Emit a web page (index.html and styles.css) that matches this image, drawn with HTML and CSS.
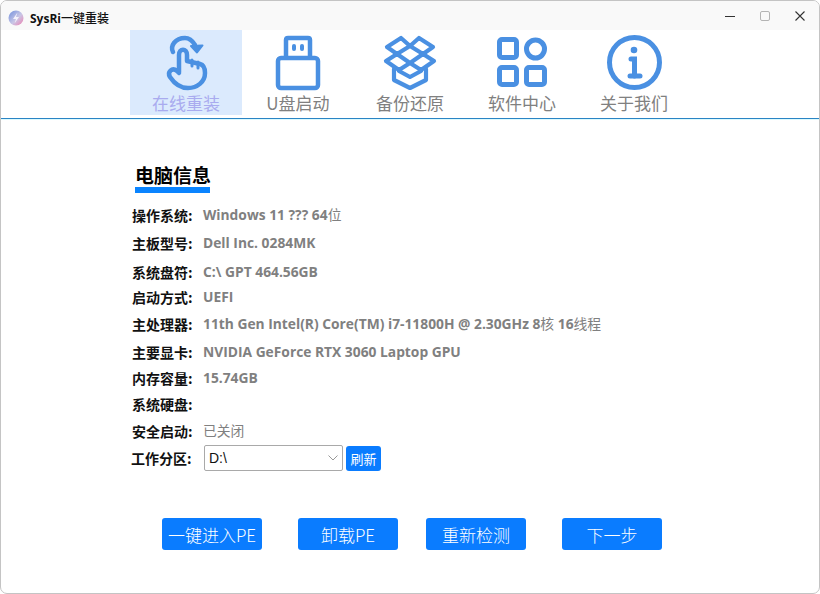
FILE: index.html

```html
<!DOCTYPE html>
<html lang="zh-CN">
<head>
  <meta charset="UTF-8">
  <meta name="viewport" content="width=device-width, initial-scale=1.0">
  <title>SysRi一键重装</title>
  <link rel="stylesheet" href="styles.css">
</head>
<body>
  <div class="window">
    <header class="titlebar">
      <div class="app-title">
        <svg class="logo" viewBox="0 0 16 16" width="16" height="16">
          <defs>
            <linearGradient id="logoGrad" x1="0" y1="0" x2="1" y2="1">
              <stop offset="0" stop-color="#6f8fdc"/>
              <stop offset="0.55" stop-color="#c9c6e6"/>
              <stop offset="1" stop-color="#ef7fae"/>
            </linearGradient>
          </defs>
          <circle cx="8" cy="8" r="7.5" fill="url(#logoGrad)"/>
          <path d="M9.500 2.500 L5 9 H8 L6.500 13.500 L11 7 H8 Z" fill="#f4f2fb"/>
        </svg>
        <span class="app-name"><strong>SysRi</strong>一键重装</span>
      </div>
      <div class="win-controls">
        <svg width="12" height="12" viewBox="0 0 12 12"><path d="M1 6.500H11" stroke="#333" stroke-width="1" fill="none"/></svg>
        <svg width="12" height="12" viewBox="0 0 12 12"><rect x="1.500" y="1.500" width="9" height="9" rx="1.500" stroke="#b4b4b4" fill="none"/></svg>
        <svg width="12" height="12" viewBox="0 0 12 12"><path d="M1.500 1.500L10.500 10.500M10.500 1.500L1.500 10.500" stroke="#333" stroke-width="1.100" fill="none"/></svg>
      </div>
    </header>

    <nav class="nav">
      <a class="nav-item active">
        <svg class="nav-icon" viewBox="0 0 56 56" fill="none" stroke="#4a90e2" stroke-width="4.500" stroke-linecap="round" stroke-linejoin="round">
          <path d="M15 17C12 11 17 3 27 3C31 3 34 5 37 10"/>
          <path d="M33 11L44.500 10.500L39 17.500Z" fill="#4a90e2" stroke-width="2"/>
          <path d="M21 37V20C21 13 29 13 29 20V26L42 29C46 30 47 34 47 38C47 47 39 53 30 53C21 53 16 48 12 42C9 37 14 32 19 36L21 38"/>
          <path d="M34 25V31M40 27V33" stroke-width="3"/>
        </svg>
        <span>在线重装</span>
      </a>
      <a class="nav-item">
        <svg class="nav-icon" viewBox="0 0 56 56" fill="none" stroke="#4a90e2" stroke-width="4.500" stroke-linejoin="round">
          <path d="M16 23V5Q16 3 18 3H38Q40 3 40 5V23"/>
          <rect x="8" y="23" width="40" height="30" rx="3"/>
          <rect x="22" y="9" width="4" height="7" rx="2" fill="#4a90e2" stroke="none"/>
          <rect x="30" y="9" width="4" height="7" rx="2" fill="#4a90e2" stroke="none"/>
        </svg>
        <span>U盘启动</span>
      </a>
      <a class="nav-item">
        <svg class="nav-icon" viewBox="0 0 56 56" fill="none" stroke="#4a90e2" stroke-width="4.200" stroke-linejoin="round" stroke-linecap="round">
          <path d="M19 3L5 12L15 19L28 11L41 19L51 12L37 3L28 11Z"/>
          <path d="M15 19L4 26L17 35L28 28L39 35L52 26L41 19L28 28Z"/>
          <path d="M12 34V45L28 53L44 45V34"/>
          <path d="M17 36L28 42L39 36"/>
        </svg>
        <span>备份还原</span>
      </a>
      <a class="nav-item">
        <svg class="nav-icon" viewBox="0 0 56 56" fill="none" stroke="#4a90e2" stroke-width="5" stroke-linejoin="round">
          <rect x="5.500" y="4.500" width="17" height="18" rx="2.500"/>
          <circle cx="41.500" cy="14" r="9"/>
          <rect x="5.500" y="32.500" width="17" height="17" rx="2.500"/>
          <rect x="32.500" y="32.500" width="18" height="17" rx="2.500"/>
        </svg>
        <span>软件中心</span>
      </a>
      <a class="nav-item">
        <svg class="nav-icon" viewBox="0 0 56 56" fill="none" stroke="#4a90e2" stroke-linecap="round">
          <circle cx="28.500" cy="27.500" r="25" stroke-width="5"/>
          <circle cx="28" cy="15" r="3.300" fill="#4a90e2" stroke="none"/>
          <path d="M25 24H28.500V41" stroke-width="5"/>
          <path d="M24 41H34" stroke-width="5"/>
        </svg>
        <span>关于我们</span>
      </a>
    </nav>

    <main class="content">
      <h2 class="section-title">电脑信息</h2>
      <div class="info-grid">
        <div class="label">操作系统:</div><div class="value">Windows 11 ??? 64<span class="cjk">位</span></div>
        <div class="label">主板型号:</div><div class="value">Dell Inc. 0284MK</div>
        <div class="label">系统盘符:</div><div class="value">C:\ GPT 464.56GB</div>
        <div class="label">启动方式:</div><div class="value">UEFI</div>
        <div class="label">主处理器:</div><div class="value">11th Gen Intel(R) Core(TM) i7-11800H @ 2.30GHz 8<span class="cjk">核</span> 16<span class="cjk">线程</span></div>
        <div class="label">主要显卡:</div><div class="value">NVIDIA GeForce RTX 3060 Laptop GPU</div>
        <div class="label">内存容量:</div><div class="value">15.74GB</div>
        <div class="label">系统硬盘:</div><div class="value"></div>
        <div class="label">安全启动:</div><div class="value"><span class="cjk">已关闭</span></div>
        <div class="label label-partition">工作分区:</div>
        <div class="partition">
          <div class="select">
            <span>D:\</span>
            <svg width="10" height="6" viewBox="0 0 10 6"><path d="M0.500 0.500L5 5L9.500 0.500" stroke="#999" fill="none"/></svg>
          </div>
          <button class="btn btn-small">刷新</button>
        </div>
      </div>
      <div class="actions">
        <button class="btn">一键进入PE</button>
        <button class="btn">卸载PE</button>
        <button class="btn">重新检测</button>
        <button class="btn">下一步</button>
      </div>
    </main>
  </div>
</body>
</html>
```

FILE: styles.css

```css
* {
  box-sizing: border-box;
}
html, body {
  height: 100%;
}
body {
  margin: 0;
  background: #fff;
  font-family: "Liberation Sans", "Noto Sans CJK SC", sans-serif;
  overflow: hidden;
}
.window {
  height: 594px;
  border: 1px solid #c4c4c4;
  border-radius: 7px;
  overflow: hidden;
  background: #fff;
}
.titlebar {
  display: flex;
  align-items: center;
  height: 29px;
  padding-left: 7px;
  background: #f9f9f9;
}
.app-title {
  display: flex;
  align-items: center;
  margin-top: 4px;
}
.logo {
  margin-right: 6px;
}
.app-name {
  font-family: "Open Sans", "Noto Sans CJK SC", sans-serif;
  font-size: 12px;
  font-weight: 500;
  color: #111;
}
.win-controls {
  display: flex;
  align-items: center;
  gap: 23px;
  margin-left: auto;
  padding-right: 13px;
}
.nav {
  display: flex;
  height: 89px;
  padding-left: 129px;
  border-bottom: 1px solid #2a84c4;
  box-shadow: 0 1px 0 #dcfaff;
}
.nav-item {
  display: flex;
  flex-direction: column;
  align-items: center;
  width: 112px;
  height: 85px;
  font-family: "Noto Sans CJK SC", sans-serif;
  font-size: 17px;
  line-height: 24px;
  color: #808080;
}
.nav-item.active {
  background: #dbeafd;
  color: #a9abef;
}
.nav-icon {
  width: 56px;
  height: 56px;
  margin-top: 5px;
}
.content {
  padding-top: 43px;
}
.section-title {
  width: 75px;
  margin: 0 0 0 134px;
  border-bottom: 6px solid #0a84ff;
  font-family: "Noto Sans CJK SC", sans-serif;
  font-size: 19px;
  font-weight: 700;
  line-height: 25px;
  color: #000;
  white-space: nowrap;
}
.info-grid {
  display: grid;
  grid-template-columns: 71px 1fr;
  grid-template-rows: 28px 29px 25px 27px 28px 26px 26px 27px 24px 26px;
  align-items: start;
  margin: 12px 0 0 131px;
}
.label {
  font-family: "Noto Sans CJK SC", sans-serif;
  font-size: 14px;
  font-weight: 700;
  line-height: 20px;
  color: #111;
  white-space: nowrap;
}
.label-partition {
  align-self: center;
  margin-left: -1px;
}
.value {
  font-family: "Open Sans", "Noto Sans CJK SC", sans-serif;
  font-size: 13.8px;
  font-weight: 700;
  line-height: 20px;
  color: #808080;
  white-space: nowrap;
}
.cjk {
  font-weight: 400;
}
.partition {
  display: flex;
  align-items: center;
  gap: 3px;
  margin-left: 1px;
}
.select {
  display: flex;
  align-items: center;
  justify-content: space-between;
  width: 139px;
  height: 26px;
  padding: 0 4px 0 4px;
  border: 1px solid #a9a9a9;
  border-radius: 2px;
  font-size: 14px;
  color: #111;
}
.btn {
  width: 100px;
  height: 32px;
  padding: 0;
  border: none;
  border-radius: 3px;
  background: #0a7cff;
  color: #fff;
  font-family: "Noto Sans CJK SC", sans-serif;
  font-size: 17px;
  font-weight: 300;
}
.btn-small {
  width: 35px;
  height: 25px;
  font-size: 13px;
  font-weight: 400;
}
.actions {
  display: flex;
  gap: 36px;
  margin: 47px 0 0 161px;
}
.actions .btn:nth-child(3) {
  margin-left: -8px;
}
```
